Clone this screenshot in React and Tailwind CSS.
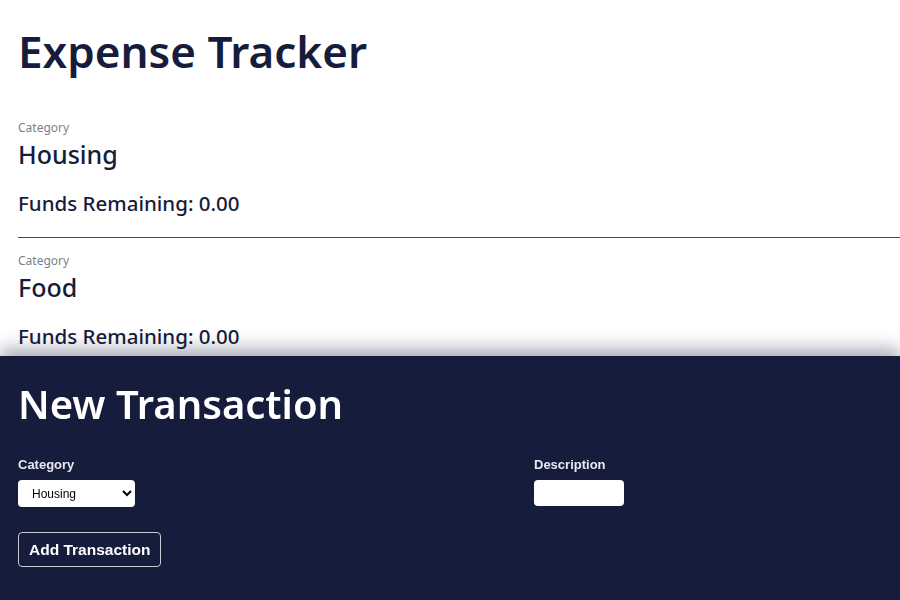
import React from "react";

function Category({ name, top }) {
  return (
    <div className={top ? "pt-[20px] pb-[20px]" : "pt-[15px] pb-[20px]"}>
      <div className="text-[12px] leading-[16px] text-[#7b7f8c]">Category</div>
      <div className="mt-[1px] text-[25px] leading-[34px] font-medium text-[#161c3b]">{name}</div>
      <div className="mt-[18px] text-[20.5px] leading-[28px] font-medium text-[#161c3b]">
        Funds Remaining: 0.00
      </div>
    </div>
  );
}

export default function App() {
  return (
    <div className="min-h-[600px] bg-white" style={{ fontFamily: '"Noto Sans", "Open Sans", sans-serif' }}>
      <div className="pl-[18px]">
        <h1 className="pt-[20px] text-[44px] leading-[62px] font-semibold text-[#161c3b]">Expense Tracker</h1>
        <div className="mt-[18px]">
          <Category name="Housing" top />
          <div className="border-t border-[#4a4a4a]" />
          <Category name="Food" />
        </div>
      </div>
      <div className="fixed bottom-0 left-0 right-0 h-[244px] bg-[#161c3b] px-[18px] shadow-[0_-8px_16px_rgba(22,28,59,0.35)]">
        <h2 className="pt-[20px] text-[40px] leading-[56px] font-semibold text-white">New Transaction</h2>
        <div
          className="mt-[25px] grid grid-cols-[516px_1fr]"
          style={{ fontFamily: '"Liberation Sans", Arial, sans-serif' }}
        >
          <label className="flex flex-col items-start">
            <span className="text-[13px] leading-[16px] font-bold text-[#e8e9ef]">Category</span>
            <select className="mt-[7px] h-[27px] w-[117px] rounded-[4px] bg-white pl-[10px] text-[12px] text-black">
              <option>Housing</option>
              <option>Food</option>
            </select>
          </label>
          <label className="flex flex-col items-start">
            <span className="text-[13px] leading-[16px] font-bold text-[#e8e9ef]">Description</span>
            <input className="mt-[7px] h-[26px] w-[90px] rounded-[4px] bg-white" />
          </label>
        </div>
        <button
          className="mt-[25px] h-[35px] rounded-[4px] border border-[#c9cad3] px-[10px] text-[15.5px] font-bold text-white"
          style={{ fontFamily: '"Liberation Sans", Arial, sans-serif' }}
        >
          Add Transaction
        </button>
      </div>
    </div>
  );
}
